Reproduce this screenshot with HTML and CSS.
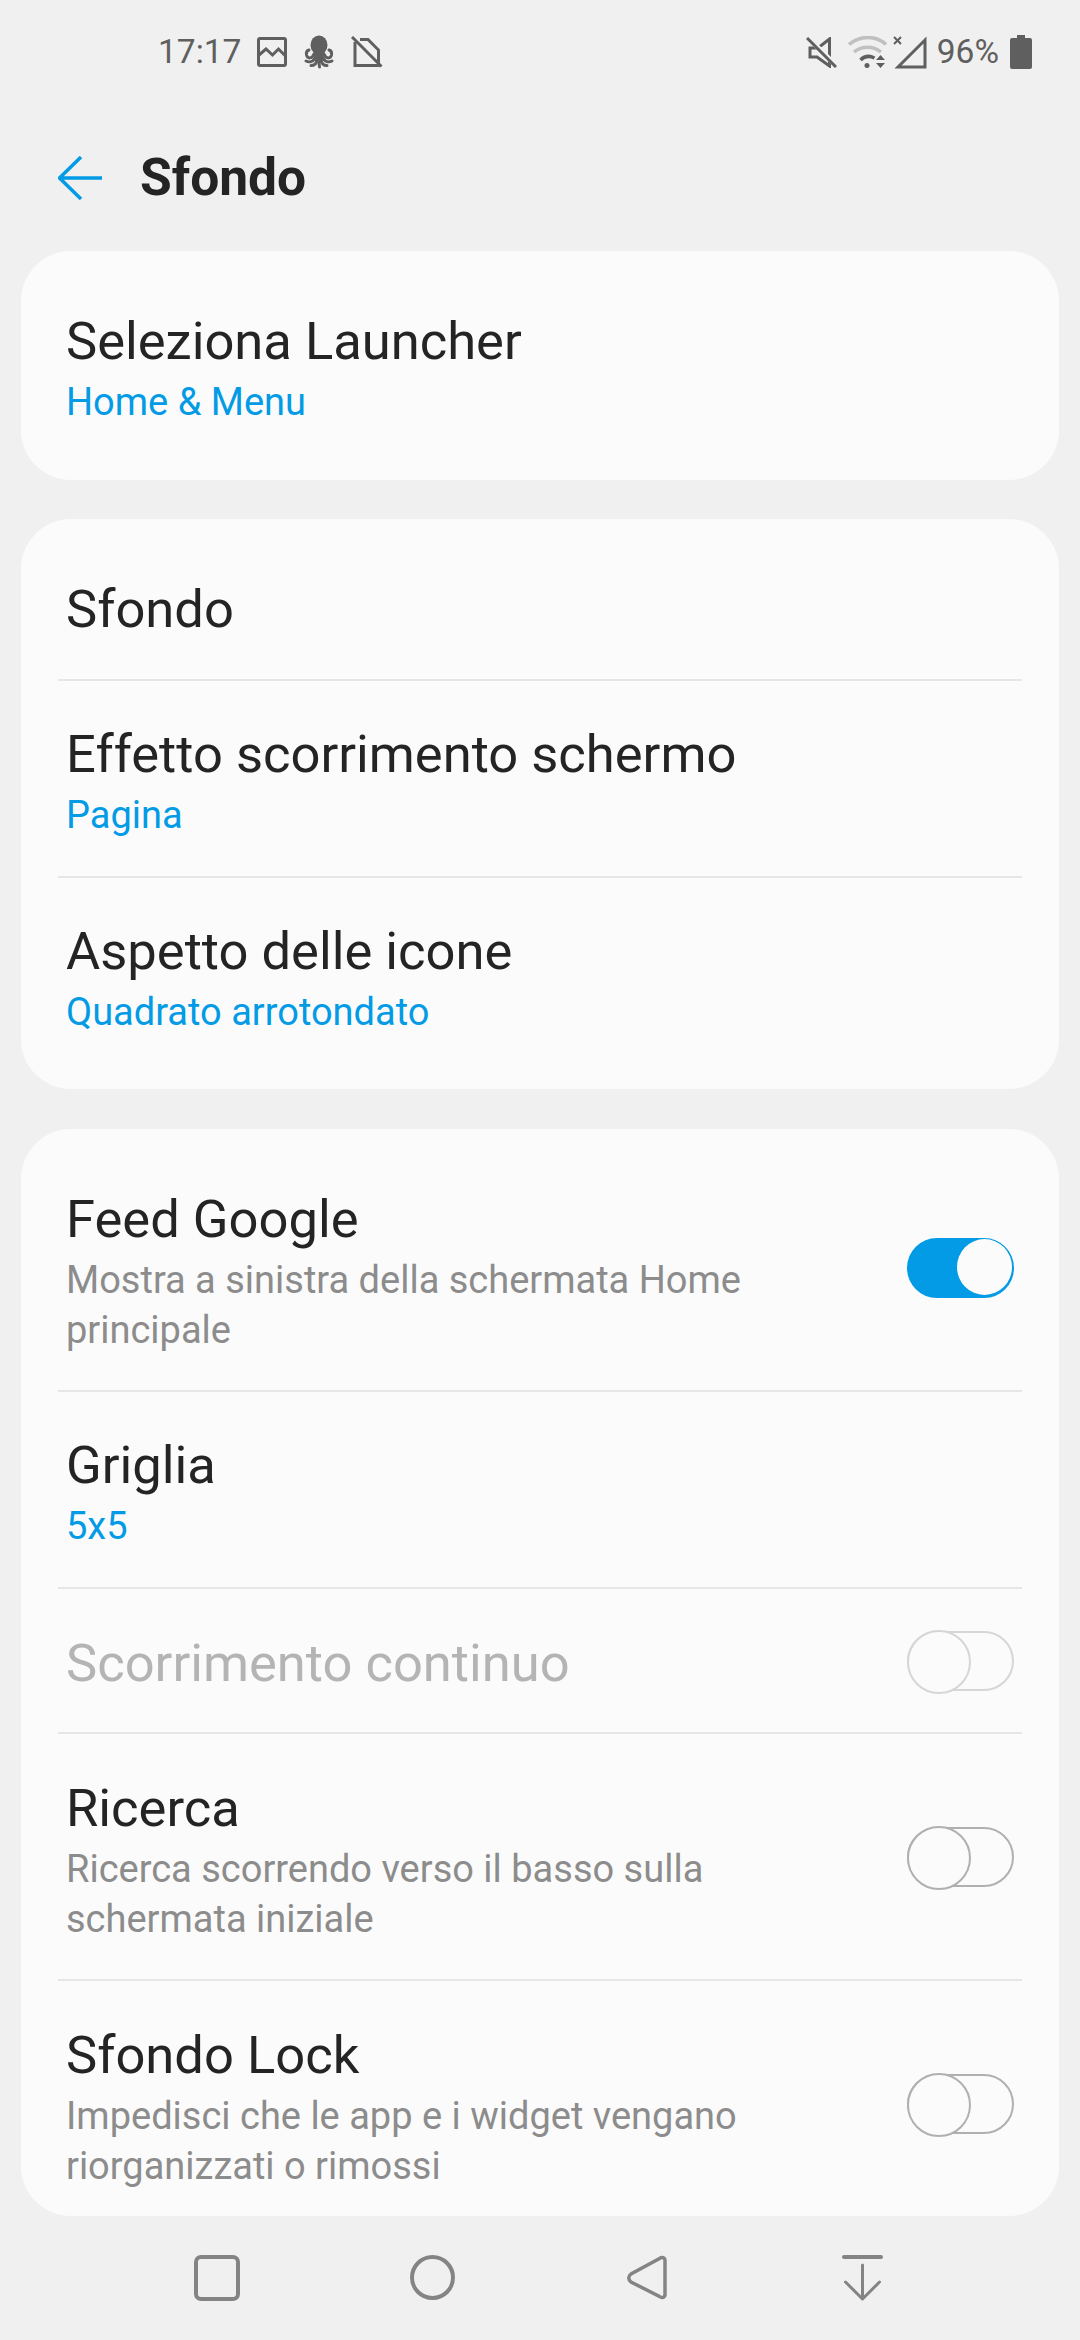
FILE: index.html
```html
<!DOCTYPE html>
<html lang="it">
<head>
<meta charset="utf-8">
<title>Sfondo</title>
<link rel="stylesheet" href="styles.css">
</head>
<body>
<div class="screen">
  <header class="status">
    <div class="status-left">
      <span class="time">17:17</span>
      <svg class="si" viewBox="0 0 30 30" width="30" height="30"><rect x="1.500" y="1.500" width="27" height="27" rx="1.500" fill="none" stroke="#5f5f5f" stroke-width="3"/><path d="M2 18l7-6 6.500 6 6-6 6.500 6.500" fill="none" stroke="#5f5f5f" stroke-width="3"/></svg>
      <svg class="si" viewBox="0 0 32 34" width="32" height="34"><ellipse cx="16" cy="10" rx="8.500" ry="9.500" fill="#5f5f5f"/><path d="M10 15h12l-2 11h-8z" fill="#5f5f5f"/><g fill="none" stroke="#5f5f5f" stroke-width="3" stroke-linecap="round"><path d="M11 19C9 24 4.500 24 3.500 20 3 17 4 15.500 6 15"/><path d="M21 19c2 5 6.500 5 7.500 1 .5-3-.5-4.500-2.500-5"/><path d="M12 23c-2 4-6 4.500-9 3"/><path d="M20 23c2 4 6 4.500 9 3"/><path d="M14 25c-.5 4-3 5.500-6 5.500"/><path d="M18 25c.5 4 3 5.500 6 5.500"/><path d="M16 25c0 3 0 5 .500 7"/></g></svg>
      <svg class="si" viewBox="0 0 32 32" width="32" height="32"><path d="M4 6v23.500h23.500V14L17 3.500H9" fill="none" stroke="#5f5f5f" stroke-width="3"/><path d="M1 1l30 30" stroke="#f0f0f0" stroke-width="2"/><path d="M1 1l29.500 29.500" stroke="#5f5f5f" stroke-width="3"/></svg>
    </div>
    <div class="status-right">
      <svg class="si mute" viewBox="0 0 31 31" width="31" height="31"><path d="M23.500 2L12 11H4v9h7l12.500 9z" fill="none" stroke="#5f5f5f" stroke-width="3"/><path d="M2 .5l29 29" stroke="#f0f0f0" stroke-width="5"/><path d="M1 1l29 29" stroke="#5f5f5f" stroke-width="3"/></svg>
      <svg class="si wifi" viewBox="0 0 40 32" width="40" height="32"><path d="M1 8.500c11-9.500 27-9.500 37 0" fill="none" stroke="#c0c0c0" stroke-width="3.500"/><path d="M6 16c8-6.500 19-6.500 27 0" fill="none" stroke="#c0c0c0" stroke-width="3.500"/><path d="M12.500 24c4-4 9-4.500 14-2" fill="none" stroke="#5f5f5f" stroke-width="3.500"/><circle cx="19" cy="29.500" r="2.500" fill="#5f5f5f"/><path d="M28 24l4.500-5 4.500 5zM28 27l4.500 5 4.500-5z" fill="#5f5f5f"/></svg>
      <svg class="si signal" viewBox="0 0 34 33" width="34" height="33"><path d="M5 31L32 4v27z" fill="none" stroke="#5f5f5f" stroke-width="3"/><path d="M1 1l7 7M8 1L1 8" stroke="#5f5f5f" stroke-width="2"/></svg>
      <span class="pct">96%</span>
      <svg class="si" viewBox="0 0 22 34" width="22" height="34"><path d="M7 0h8v3h5a2 2 0 0 1 2 2v27a2 2 0 0 1-2 2H2a2 2 0 0 1-2-2V5a2 2 0 0 1 2-2h5z" fill="#5f5f5f"/></svg>
    </div>
  </header>

  <div class="appbar">
    <svg class="back" viewBox="0 0 44 44" width="44" height="44"><path d="M44 22H2M23 1L1.500 22 23 43" fill="none" stroke="#039be5" stroke-width="3.500"/></svg>
    <h1 class="page-title">Sfondo</h1>
  </div>

  <main class="list">
    <section class="card">
      <div class="row two"><div class="text"><div class="title">Seleziona Launcher</div><div class="value">Home &amp; Menu</div></div></div>
    </section>
    <section class="card">
      <div class="row one"><div class="text"><div class="title">Sfondo</div></div></div>
      <div class="row two"><div class="text"><div class="title">Effetto scorrimento schermo</div><div class="value">Pagina</div></div></div>
      <div class="row two"><div class="text"><div class="title">Aspetto delle icone</div><div class="value">Quadrato arrotondato</div></div></div>
    </section>
    <section class="card clipped">
      <div class="row three"><div class="text"><div class="title">Feed Google</div><div class="desc">Mostra a sinistra della schermata Home<br>principale</div></div><span class="toggle on"></span></div>
      <div class="row two"><div class="text"><div class="title">Griglia</div><div class="value">5x5</div></div></div>
      <div class="row one"><div class="text"><div class="title disabled">Scorrimento continuo</div></div><span class="toggle dis"></span></div>
      <div class="row three"><div class="text"><div class="title">Ricerca</div><div class="desc">Ricerca scorrendo verso il basso sulla<br>schermata iniziale</div></div><span class="toggle"></span></div>
      <div class="row three"><div class="text"><div class="title">Sfondo Lock</div><div class="desc">Impedisci che le app e i widget vengano<br>riorganizzati o rimossi</div></div><span class="toggle"></span></div>
    </section>
  </main>

  <nav class="navbar">
    <svg viewBox="0 0 46 46" width="46" height="46"><rect x="2" y="2" width="42" height="42" rx="5" fill="none" stroke="#848484" stroke-width="4"/></svg>
    <svg viewBox="0 0 46 46" width="46" height="46"><circle cx="22.500" cy="22.500" r="20.500" fill="none" stroke="#848484" stroke-width="4"/></svg>
    <svg viewBox="0 0 46 46" width="46" height="46"><path d="M33.500 3.500c2.500-2 5.500-1 5.500 2v34c0 3-3 4-5.500 2L5 27c-3-2.500-3-5.500 0-8z" fill="none" stroke="#848484" stroke-width="3.500"/></svg>
    <svg viewBox="0 0 46 46" width="46" height="46"><path d="M2 2h37" stroke="#848484" stroke-width="4" stroke-linecap="round"/><path d="M20.500 10v34M3.500 27l17 17 17-17" fill="none" stroke="#848484" stroke-width="3" stroke-linecap="round" stroke-linejoin="round"/></svg>
  </nav>
</div>
</body>
</html>
```
FILE: styles.css
```css
* { box-sizing: border-box; }
html, body { margin: 0; padding: 0; }
body { background: #f0f0f0; font-family: Roboto, sans-serif; color: #242424; }
.screen { width: 1080px; height: 2340px; display: flex; flex-direction: column; overflow: hidden; }

.status { height: 104px; flex: none; padding: 0 48px 0 158px; display: flex; justify-content: space-between; align-items: center; }
.status-left, .status-right { display: flex; align-items: center; }
.status-left { gap: 16px; }
.status-right { gap: 10px; }
.si { display: block; flex: none; }
.mute { margin-right: 1px; }
.wifi { margin-right: -5px; }
.time, .pct { font-family: Roboto, sans-serif; font-size: 33.5px; line-height: 40px; color: #5f5f5f; }
.pct { margin-right: 1px; }

.appbar { height: 147px; flex: none; display: flex; align-items: center; gap: 38px; padding-left: 58px; }
.back { display: block; flex: none; }
.page-title { margin: 0; font-size: 51.5px; font-weight: 700; line-height: 64px; color: #242424; }

.list { flex: 1; min-height: 0; padding: 0 21px; display: flex; flex-direction: column; gap: 39px; }
.card { background: #fbfbfb; border-radius: 50px; padding: 16px 37px; flex: none; }
.clipped { height: 1087px; overflow: hidden; margin-top: 1px; }
.row { display: flex; align-items: center; justify-content: space-between; padding: 0 8px; }
.row + .row { border-top: 2px solid #e6e6e6; }
.one { height: 145px; }
.two { height: 197px; }
.three { height: 247px; }
.row:first-child.one { height: 144px; }
.row:first-child.three { height: 245px; }
.one .text { padding-top: 4px; }
.two .text { padding-top: 7px; }
.three .text { padding-top: 9px; }
.title { font-size: 52.5px; line-height: 60px; color: #242424; }
.title.disabled { color: #b4b4b4; }
.value { font-size: 38px; line-height: 50px; color: #039be5; margin-top: 6px; }
.desc { font-size: 38px; line-height: 50px; color: #8c8c8c; margin-top: 6px; }

.toggle { flex: none; display: block; position: relative; width: 107px; height: 60px; border-radius: 30px; border: 2.5px solid #b0b0b0; background: #fbfbfb; }
.toggle::after { content: ""; position: absolute; left: -2.5px; top: -2.5px; width: 60px; height: 60px; border-radius: 50%; border: 2.5px solid #b0b0b0; background: #fbfbfb; }
.toggle.on { background: #039be5; border-color: #039be5; }
.toggle.on::after { left: 47.5px; top: -0.5px; width: 55px; height: 56px; border: 0; }
.toggle.dis, .toggle.dis::after { border-color: #d6d6d6; }

.navbar { height: 124px; flex: none; display: flex; gap: 170px; padding: 39px 0 0 194px; align-items: flex-start; }
.navbar svg { display: block; flex: none; }
```
